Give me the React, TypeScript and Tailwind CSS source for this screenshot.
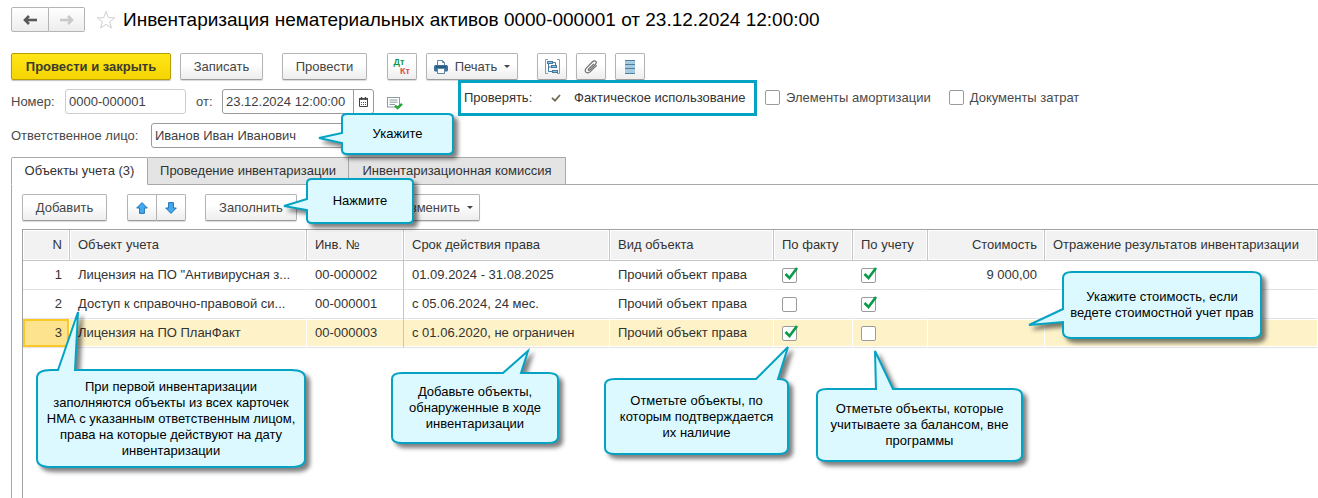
import { useState } from "react";
import type { ReactNode } from "react";

const buttonBase =
  "flex h-[27px] shrink-0 items-center rounded-[2px] border border-[#b4b4b4] border-b-[#9c9c9c] bg-gradient-to-b from-white from-40% to-[#ededed] text-[#454545] shadow-[0_1px_1px_rgba(0,0,0,0.15)]";

const inputBase = "h-[25px] rounded-[3px] border bg-white px-[3px] text-[#3f3f3f] outline-none";

const columns = [
  { title: "N", width: "w-[47px]", align: "text-right" },
  { title: "Объект учета", width: "w-[237px]", align: "text-left" },
  { title: "Инв. №", width: "w-[97px]", align: "text-left" },
  { title: "Срок действия права", width: "w-[206px]", align: "text-left" },
  { title: "Вид объекта", width: "w-[164px]", align: "text-left" },
  { title: "По факту", width: "w-[79px]", align: "text-left" },
  { title: "По учету", width: "w-[75px]", align: "text-left" },
  { title: "Стоимость", width: "w-[117px]", align: "text-right" },
  { title: "Отражение результатов инвентаризации", width: "", align: "text-left" },
];

const assets = [
  {
    n: 1,
    name: 'Лицензия на ПО "Антивирусная з...',
    inv: "00-000002",
    term: "01.09.2024 - 31.08.2025",
    kind: "Прочий объект права",
    fact: true,
    book: true,
    cost: "9 000,00",
  },
  {
    n: 2,
    name: "Доступ к справочно-правовой си...",
    inv: "00-000001",
    term: "с 05.06.2024, 24 мес.",
    kind: "Прочий объект права",
    fact: false,
    book: true,
    cost: "",
  },
  {
    n: 3,
    name: "Лицензия на ПО ПланФакт",
    inv: "00-000003",
    term: "с 01.06.2020, не ограничен",
    kind: "Прочий объект права",
    fact: true,
    book: false,
    cost: "",
  },
];

const tabs = [
  { title: "Объекты учета (3)", width: "w-[137px]" },
  { title: "Проведение инвентаризации", width: "w-[201px]" },
  { title: "Инвентаризационная комиссия", width: "w-[217px]" },
];

type Tail = { side: "left" | "top"; from: number; to: number; tip: [number, number] };

type Hint = { text: string[]; place: string; w: number; h: number; rx: number; ry: number; tail: Tail };

const hints: Hint[] = [
  {
    text: ["Укажите"],
    place: "left-[342px] top-[114px] w-[111px] h-[40px]",
    w: 111, h: 40, rx: 5, ry: 4,
    tail: { side: "left", from: 19, to: 29, tip: [-23, 24] },
  },
  {
    text: ["Нажмите"],
    place: "left-[307px] top-[179px] w-[106px] h-[44px]",
    w: 106, h: 44, rx: 5, ry: 4,
    tail: { side: "left", from: 20, to: 31, tip: [-23, 27] },
  },
  {
    text: ["Укажите стоимость, если", "ведете стоимостной учет прав"],
    place: "left-[1063px] top-[272px] w-[198px] h-[66px]",
    w: 198, h: 66, rx: 9, ry: 6,
    tail: { side: "left", from: 37, to: 50, tip: [-34, 53] },
  },
  {
    text: [
      "При первой инвентаризации",
      "заполняются объекты из всех карточек",
      "НМА с указанным ответственным лицом,",
      "права на которые действуют на дату",
      "инвентаризации",
    ],
    place: "left-[37px] top-[370px] w-[268px] h-[97px]",
    w: 268, h: 97, rx: 14, ry: 8,
    tail: { side: "top", from: 21, to: 38, tip: [41, -58] },
  },
  {
    text: ["Добавьте объекты,", "обнаруженные в ходе", "инвентаризации"],
    place: "left-[392px] top-[373px] w-[166px] h-[70px]",
    w: 166, h: 70, rx: 10, ry: 6,
    tail: { side: "top", from: 111, to: 129, tip: [136, -22] },
  },
  {
    text: ["Отметьте объекты, по", "которым подтверждается", "их наличие"],
    place: "left-[605px] top-[379px] w-[183px] h-[75px]",
    w: 183, h: 75, rx: 10, ry: 6,
    tail: { side: "top", from: 151, to: 173, tip: [183, -32] },
  },
  {
    text: ["Отметьте объекты, которые", "учитываете за балансом, вне", "программы"],
    place: "left-[817px] top-[389px] w-[205px] h-[72px]",
    w: 205, h: 72, rx: 10, ry: 6,
    tail: { side: "top", from: 59, to: 76, tip: [58, -38] },
  },
];

function bubblePath({ w, h, rx, ry, tail }: Hint) {
  const [x, y] = tail.tip;
  const top = tail.side === "top" ? `H${tail.from} L${x} ${y} L${tail.to} 0` : "";
  const left = tail.side === "left" ? `V${tail.to} L${x} ${y} L0 ${tail.from}` : "";
  return `M${rx} 0 ${top} H${w - rx} Q${w} 0 ${w} ${ry} V${h - ry} Q${w} ${h} ${w - rx} ${h} H${rx} Q0 ${h} 0 ${h - ry} ${left} V${ry} Q0 0 ${rx} 0 Z`;
}

function Callout({ hint }: { hint: Hint }) {
  return (
    <div className={`absolute flex items-center justify-center ${hint.place}`}>
      <svg
        viewBox={`0 0 ${hint.w} ${hint.h}`}
        className="absolute inset-0 h-full w-full overflow-visible drop-shadow-[4px_4px_2px_rgba(0,0,0,0.5)]"
      >
        <path d={bubblePath(hint)} fill="#dbf9ff" stroke="#04a3c4" strokeWidth="2" />
      </svg>
      <p className="relative text-center leading-4 whitespace-nowrap text-black">
        {hint.text.map((line) => (
          <span key={line} className="block">{line}</span>
        ))}
      </p>
    </div>
  );
}

function Check({ label, initial }: { label: string; initial: boolean }) {
  const [on, setOn] = useState(initial);
  return (
    <span className="relative block h-[15px] w-[15px]">
      <input
        type="checkbox"
        aria-label={label}
        checked={on}
        onChange={() => setOn(!on)}
        className="block h-[15px] w-[15px] appearance-none rounded-[2px] border border-[#9b9b9b] bg-white"
      />
      {on && (
        <svg viewBox="0 0 17 16" className="pointer-events-none absolute -top-px left-0 h-4 w-[17px]" fill="none">
          <path d="M3.5 7 L7.5 11 L15 1" stroke="#0b9a49" strokeWidth="2.6" />
        </svg>
      )}
    </span>
  );
}

function Option({ children }: { children: ReactNode }) {
  return (
    <label className="flex items-center gap-[6px] whitespace-nowrap text-[#4a4a4a]">
      <input type="checkbox" className="h-[15px] w-[15px] appearance-none rounded-[2px] border border-[#9b9b9b] bg-white" />
      {children}
    </label>
  );
}

function Arrow({ className }: { className: string }) {
  return (
    <svg viewBox="0 0 14 10" className={`h-[10px] w-[14px] ${className}`} fill="none" stroke="currentColor" strokeWidth="2.6">
      <path d="M14 5 H2" />
      <path d="M6 1 L2 5 L6 9" />
    </svg>
  );
}

function BlueArrow({ className }: { className: string }) {
  return (
    <svg viewBox="0 0 12 12" className={`h-3 w-3 ${className}`}>
      <path d="M6 .6 L11.3 6 H8.4 V11.4 H3.6 V6 H.7 Z" fill="#42aaf0" stroke="#2573b0" strokeWidth="1" strokeLinejoin="round" />
    </svg>
  );
}

function Caret() {
  return (
    <svg viewBox="0 0 6 3" className="h-[3px] w-[6px]">
      <path d="M0 0 H6 L3 3 Z" fill="#444" />
    </svg>
  );
}

function PrinterIcon() {
  return (
    <svg viewBox="0 0 14 14" className="h-[14px] w-[14px]">
      <path d="M3.5 5 V.5 H8.5 L10.5 2.5 V5" fill="#fff" stroke="#5f87a3" />
      <path d="M8.5 .5 V2.5 H10.5" fill="none" stroke="#5f87a3" />
      <rect x="0" y="5" width="14" height="6.5" rx="1.5" fill="#3a719b" />
      <path d="M2 7 H12" stroke="#17486c" />
      <rect x="3.5" y="8.5" width="7" height="5" fill="#fff" stroke="#5f87a3" />
    </svg>
  );
}

function StructureIcon() {
  return (
    <svg viewBox="0 0 15 15" className="h-[15px] w-[15px]" fill="none" stroke="#44799f">
      <path d="M3 .5 H.5 V14.5 H3 M12 .5 H14.5 V14.5 H12" stroke="#7e9eb5" />
      <path d="M3.5 5 V12.5 H7 M3.5 8 H6 M8 3.5 H10.5 V6" />
      <rect x="2.5" y="2.5" width="5" height="2" fill="#8fc0dc" />
      <rect x="6.5" y="6.5" width="5" height="2" fill="#8fc0dc" />
      <rect x="7.5" y="11.5" width="5" height="2" fill="#8fc0dc" />
    </svg>
  );
}

function ClipIcon() {
  return (
    <svg viewBox="0 0 14 14" className="h-[14px] w-[14px]" fill="none" stroke="#6e6e6e" strokeWidth="1.2" strokeLinecap="round">
      <path d="M9.5 4.2 L4.6 9.1 Q3.9 10.3 4.9 10.4 Q5.4 10.4 6 9.8 L11.3 4.5 Q13 2.5 11.6 1.3 Q10.2 .2 8.5 1.8 L2.5 7.8 Q.3 10.2 1.9 12.1 Q3.8 13.9 6.3 11.6 L12.4 5.6" />
    </svg>
  );
}

function ListIcon() {
  return (
    <svg viewBox="0 0 10 14" className="h-[14px] w-[10px]">
      <rect x="0" y="0" width="10" height="14" fill="#a5cbe0" />
      <path d="M0 .5 H10 M0 4.5 H10 M0 8.5 H10 M0 13.5 H10" stroke="#4f7f9f" />
    </svg>
  );
}

function CalendarIcon() {
  return (
    <svg viewBox="0 0 9 10" className="h-[10px] w-[9px]">
      <path d="M.5 1.5 H8.5 V9.5 H.5 Z" fill="#fff" stroke="#444" />
      <path d="M0 2 H9 M2.5 0 V3 M6.5 0 V3" stroke="#444" strokeWidth="1.4" />
      <path d="M2 5.5 H7.5 M2 7.5 H7.5" stroke="#555" strokeDasharray="1 1" />
    </svg>
  );
}

function PostedIcon() {
  return (
    <svg viewBox="0 0 16 13" className="h-[13px] w-4" fill="none">
      <rect x=".5" y=".5" width="12" height="9.5" fill="#fff" stroke="#8d9aa0" />
      <path d="M2.5 3 H10.5 M2.5 5.2 H10.5 M2.5 7.5 H8" stroke="#8d9aa0" />
      <path d="M8 8.5 L10.5 11 L15 6.8" stroke="#25a73c" strokeWidth="2.4" />
    </svg>
  );
}

function AssetsTable() {
  return (
    <table className="w-full table-fixed border-separate border-spacing-0 border-t border-[#a0a0a0] text-[#333333]">
      <thead>
        <tr className="h-[31px]">
          {columns.map((c) => (
            <th
              key={c.title}
              className={`border-r border-b border-[#c6c6c6] bg-[#f2f2f2] pr-[7px] pl-2 font-normal whitespace-nowrap shadow-[inset_0_0_0_1px_#fff] ${c.width} ${c.align}`}
            >
              {c.title}
            </th>
          ))}
        </tr>
      </thead>
      <tbody>
        {assets.map((a) => {
          const active = a.n === 3;
          const base = "border-r border-b border-b-[#e2e2e2] pr-[7px] pl-2 whitespace-nowrap";
          const fill = active ? "bg-[#fdf2c8] shadow-[inset_0_1px_0_#fff,inset_0_-1px_0_#fff]" : "";
          const cell = `${base} ${fill} ${active ? "border-r-white" : "border-r-transparent"}`;
          return (
            <tr key={a.n} className="h-[29px]">
              <td className={`text-right ${active ? `${base} border-r-white bg-[#fee38e] shadow-[inset_0_0_0_2px_#fbc825]` : cell}`}>
                {a.n}
              </td>
              <td className={cell}>{a.name}</td>
              <td className={`${base} ${fill} border-r-[#c6c6c6]`}>{a.inv}</td>
              <td className={cell}>{a.term}</td>
              <td className={cell}>{a.kind}</td>
              <td className={cell}>
                <Check label="По факту" initial={a.fact} />
              </td>
              <td className={cell}>
                <Check label="По учету" initial={a.book} />
              </td>
              <td className={`${cell} text-right`}>{a.cost}</td>
              <td className={cell} />
            </tr>
          );
        })}
      </tbody>
    </table>
  );
}

export default function App() {
  const [tab, setTab] = useState(0);

  return (
    <div className="relative flex min-h-screen flex-col overflow-hidden bg-white pt-[7px] pl-[11px] font-['Liberation_Sans',Arial,sans-serif] text-[13px] leading-4">
      <header className="flex h-[25px] items-center">
        <div className="flex">
          <button aria-label="Назад" className="flex h-[25px] w-[38px] items-center justify-center rounded-l-[2px] border border-[#b4b4b4] bg-gradient-to-b from-white to-[#ededed]">
            <Arrow className="text-[#5a5a5a]" />
          </button>
          <button aria-label="Вперед" className="flex h-[25px] w-[36px] items-center justify-center rounded-r-[2px] border border-l-0 border-[#b4b4b4] bg-gradient-to-b from-white to-[#ededed]">
            <Arrow className="rotate-180 text-[#c9c9c9]" />
          </button>
        </div>
        <button aria-label="В избранное" className="ml-[11px]">
          <svg viewBox="0 0 20 20" className="h-5 w-5" fill="none" stroke="#cfcfcf">
            <path d="M10 1.5 L12.3 7.6 L18.8 7.8 L13.7 11.8 L15.5 18 L10 14.4 L4.5 18 L6.3 11.8 L1.2 7.8 L7.7 7.6 Z" />
          </svg>
        </button>
        <h1 className="ml-[7px] text-[19px] leading-6 whitespace-nowrap text-black">
          Инвентаризация нематериальных активов 0000-000001 от 23.12.2024 12:00:00
        </h1>
      </header>

      <div className="mt-[21px] flex">
        <button className="h-[27px] w-[160px] rounded-[2px] border border-[#b79d00] bg-gradient-to-b from-[#ffe617] to-[#f5d400] font-bold text-[#3b3b2c] shadow-[0_1px_1px_rgba(0,0,0,0.25)]">
          Провести и закрыть
        </button>
        <button className={`${buttonBase} ml-[9px] w-[83px] justify-center`}>Записать</button>
        <button className={`${buttonBase} ml-[19px] w-[85px] justify-center`}>Провести</button>
        <button aria-label="Дт/Кт" className={`${buttonBase} ml-5 w-[30px] justify-center`}>
          <span className="flex flex-col text-[9px] leading-[9px] font-bold">
            <span className="pr-[6px] text-[#14944a]">Дт</span>
            <span className="pl-[6px] text-[#e04848]">Кт</span>
          </span>
        </button>
        <button className={`${buttonBase} ml-[9px] w-[92px] justify-center gap-[7px]`}>
          <PrinterIcon />
          Печать
          <Caret />
        </button>
        <button aria-label="Структура подчиненности" className={`${buttonBase} ml-[19px] w-[30px] justify-center`}>
          <StructureIcon />
        </button>
        <button aria-label="Присоединенные файлы" className={`${buttonBase} ml-[9px] w-[30px] justify-center`}>
          <ClipIcon />
        </button>
        <button aria-label="Список" className={`${buttonBase} ml-[9px] w-[30px] justify-center`}>
          <ListIcon />
        </button>
      </div>

      <div className="flex h-[35px] items-center">
        <div className="mt-2 flex items-center">
          <label htmlFor="number" className="w-[54px] text-[#4a4a4a]">Номер:</label>
          <input id="number" defaultValue="0000-000001" className={`${inputBase} w-[121px] border-[#cccccc]`} />
          <label htmlFor="date" className="ml-[10px] w-[26px] text-[#4a4a4a]">от:</label>
          <div className="flex h-[25px] w-[152px] rounded-[3px] border border-[#9b9b9b]">
            <input id="date" defaultValue="23.12.2024 12:00:00" className="w-[130px] bg-transparent pl-[3px] text-[#3f3f3f] outline-none" />
            <button aria-label="Выбрать дату" className="flex flex-1 items-center justify-center border-l border-[#9b9b9b]">
              <CalendarIcon />
            </button>
          </div>
          <span className="ml-[13px] pt-1">
            <PostedIcon />
          </span>
        </div>
        <div className="ml-[55px] flex h-9 w-[299px] shrink-0 items-center border-[3px] border-[#04a3c4] pl-[3px] text-[#333333]">
          <span className="w-[87px]">Проверять:</span>
          <label className="relative flex items-center gap-2 whitespace-nowrap">
            <input type="checkbox" defaultChecked className="peer h-[15px] w-[15px] appearance-none" />
            <svg viewBox="0 0 10 8" className="pointer-events-none absolute top-1 left-0 hidden h-2 w-[10px] peer-checked:block" fill="none">
              <path d="M1 3.8 L4 6.6 L9 1" stroke="#6f6b50" strokeWidth="1.8" />
            </svg>
            Фактическое использование
          </label>
        </div>
        <div className="ml-2 flex gap-[18px]">
          <Option>Элементы амортизации</Option>
          <Option>Документы затрат</Option>
        </div>
      </div>

      <div className="mt-2 flex items-center">
        <label htmlFor="person" className="w-[140px] text-[#4a4a4a]">Ответственное лицо:</label>
        <input id="person" defaultValue="Иванов Иван Иванович" className={`${inputBase} w-[222px] border-[#9b9b9b]`} />
      </div>

      <div role="tablist" className="mt-[9px] flex h-7">
        {tabs.map((t, i) => (
          <button
            key={t.title}
            role="tab"
            aria-selected={tab === i}
            onClick={() => setTab(i)}
            className={`h-7 border border-[#a8a8a8] whitespace-nowrap text-[#333333] ${t.width} ${
              i > 0 ? "border-l-0" : ""
            } ${tab === i ? "rounded-t-[2px] border-b-white bg-white" : "bg-[#e4e4e4]"}`}
          >
            {t.title}
          </button>
        ))}
        <span className="flex-1 border-b border-[#a8a8a8]" />
      </div>

      <section className="flex flex-1 flex-col border-l border-[#a8a8a8] pl-[10px]">
        <div className="mt-[9px] mb-[8px] flex">
          <button className={`${buttonBase} w-[85px] justify-center`}>Добавить</button>
          <button aria-label="Вверх" className={`${buttonBase} ml-5 w-[30px] justify-center rounded-r-none`}>
            <BlueArrow className="" />
          </button>
          <button aria-label="Вниз" className={`${buttonBase} w-[29px] justify-center rounded-l-none border-l-0`}>
            <BlueArrow className="rotate-180" />
          </button>
          <button className={`${buttonBase} ml-[19px] w-[92px] justify-center`}>Заполнить</button>
          <button className={`${buttonBase} ml-[89px] w-[94px] justify-end gap-[7px] pr-[6px]`}>
            Изменить
            <Caret />
          </button>
        </div>
        <div className="flex-1 border-l border-[#a0a0a0]">
          <AssetsTable />
        </div>
      </section>

      {hints.map((hint) => (
        <Callout key={hint.text[0]} hint={hint} />
      ))}
    </div>
  );
}
